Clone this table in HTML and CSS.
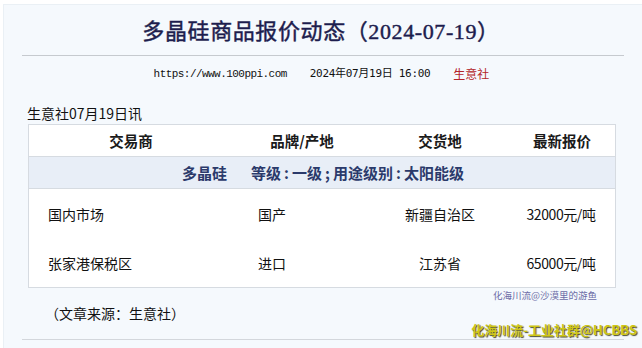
FILE: index.html
```html
<!DOCTYPE html>
<html lang="zh-CN">
<head>
<meta charset="utf-8">
<title>多晶硅商品报价动态</title>
<link rel="stylesheet" href="styles.css">
</head>
<body>
<div class="page">
  <h1 class="title">多晶硅商品报价动态（2024-07-19）</h1>
  <div class="rule"></div>
  <div class="meta">
    <span class="url">https://www.100ppi.com</span>
    <span class="date">2024年07月19日 16:00</span>
    <span class="src">生意社</span>
  </div>
  <div class="lead">生意社07月19日讯</div>
  <div class="table">
    <div class="row head">
      <div class="c c1">交易商</div>
      <div class="c c2">品牌/产地</div>
      <div class="c c3">交货地</div>
      <div class="c c4">最新报价</div>
    </div>
    <div class="row group">多晶硅<span class="gap"></span>等级<span class="p">:</span>一级<span class="p">;</span>用途级别<span class="p">:</span>太阳能级</div>
    <div class="row data">
      <div class="c c1">国内市场</div>
      <div class="c c2">国产</div>
      <div class="c c3">新疆自治区</div>
      <div class="c c4">32000元/吨</div>
    </div>
    <div class="row data">
      <div class="c c1">张家港保税区</div>
      <div class="c c2">进口</div>
      <div class="c c3">江苏省</div>
      <div class="c c4">65000元/吨</div>
    </div>
  </div>
  <div class="wm">化海川流@沙漠里的游鱼</div>
  <div class="source">（文章来源：生意社）</div>
  <div class="brand">化海川流-工业社群@HCBBS</div>
  <div class="rule bottom"></div>
</div>
</body>
</html>
```

FILE: styles.css
```css
html, body {
  margin: 0;
  padding: 0;
  background: #ffffff;
}
body {
  font-family: "Noto Sans CJK SC", "Liberation Sans", sans-serif;
  color: #111;
}
.page {
  margin: 4px 0 0 3px;
  height: 344px;
  box-sizing: border-box;
  background: #f5f9fd;
  border-left: 1px solid #eaf0f5;
  border-top: 1px solid #eaf0f5;
  overflow: hidden;
}
.title {
  margin: 0;
  padding-top: 12px;
  text-align: center;
  font-family: "Liberation Serif", "Noto Sans CJK SC", serif;
  font-size: 22px;
  line-height: 30px;
  font-weight: 400;
  letter-spacing: 0.6px;
  -webkit-text-stroke: 0.45px #1d1d4e;
  color: #1d1d4e;
  padding-right: 4px;
}
.rule {
  margin: 8px 18px 0 18px;
  border-top: 1px solid #c6cacf;
}
.meta {
  margin-top: 10px;
  display: flex;
  justify-content: center;
  align-items: center;
  gap: 23px;
  font-size: 12px;
  line-height: 16px;
  padding-right: 3px;
}
.url {
  font-family: "Liberation Mono", monospace;
  font-size: 11px;
  letter-spacing: -0.55px;
}
.date {
  font-family: "DejaVu Sans Mono", "Noto Sans CJK SC", monospace;
  font-size: 11px;
  letter-spacing: -0.3px;
}
.src {
  color: #b3262a;
}
.lead {
  margin-top: 22px;
  padding-left: 23px;
  font-size: 14px;
  line-height: 18px;
}
.table {
  margin: 2px 0 0 24px;
  width: 588px;
  box-sizing: border-box;
  border: 1px solid #d6dbe1;
  background: #ffffff;
}
.row {
  display: grid;
  grid-template-columns: 204px 138px 138px 1fr;
  align-items: center;
}
.head {
  height: 31px;
  border-bottom: 1px solid #d6dbe1;
  font-weight: 700;
  font-size: 14.5px;
  color: #1a1a1a;
}
.head .c { text-align: center; }
.group {
  display: block;
  height: 31px;
  line-height: 31px;
  background: #e8eef7;
  border-bottom: 1px solid #d6dbe1;
  text-align: center;
  font-weight: 700;
  font-size: 15px;
  color: #2b3a6b;
  padding-left: 2px;
}
.group .gap {
  display: inline-block;
  width: 24px;
}
.group .p {
  display: inline-block;
  width: 11px;
  text-align: center;
}
.data {
  height: 49px;
  font-size: 14px;
  color: #111;
}
.data .c1 { padding-left: 19px; }
.data .c2 { padding-left: 25px; }
.data .c3 { text-align: center; }
.data .c4 {
  text-align: center;
  letter-spacing: -0.4px;
  padding-right: 2px;
}
.wm {
  margin-top: 1px;
  padding-right: 45px;
  text-align: right;
  font-size: 9.5px;
  line-height: 12px;
  color: #6c6ca6;
}
.source {
  margin-top: 3px;
  padding-left: 41px;
  font-size: 14px;
  line-height: 18px;
}
.brand {
  margin-top: -1px;
  padding-right: 5px;
  text-align: right;
  font-size: 13px;
  line-height: 18px;
  font-weight: 700;
  color: #cfc716;
  text-shadow: 1px 1px 1px rgba(40, 40, 10, 0.85);
}
.rule.bottom {
  margin-top: 0;
  border-top-color: #d3d7dc;
}
```
